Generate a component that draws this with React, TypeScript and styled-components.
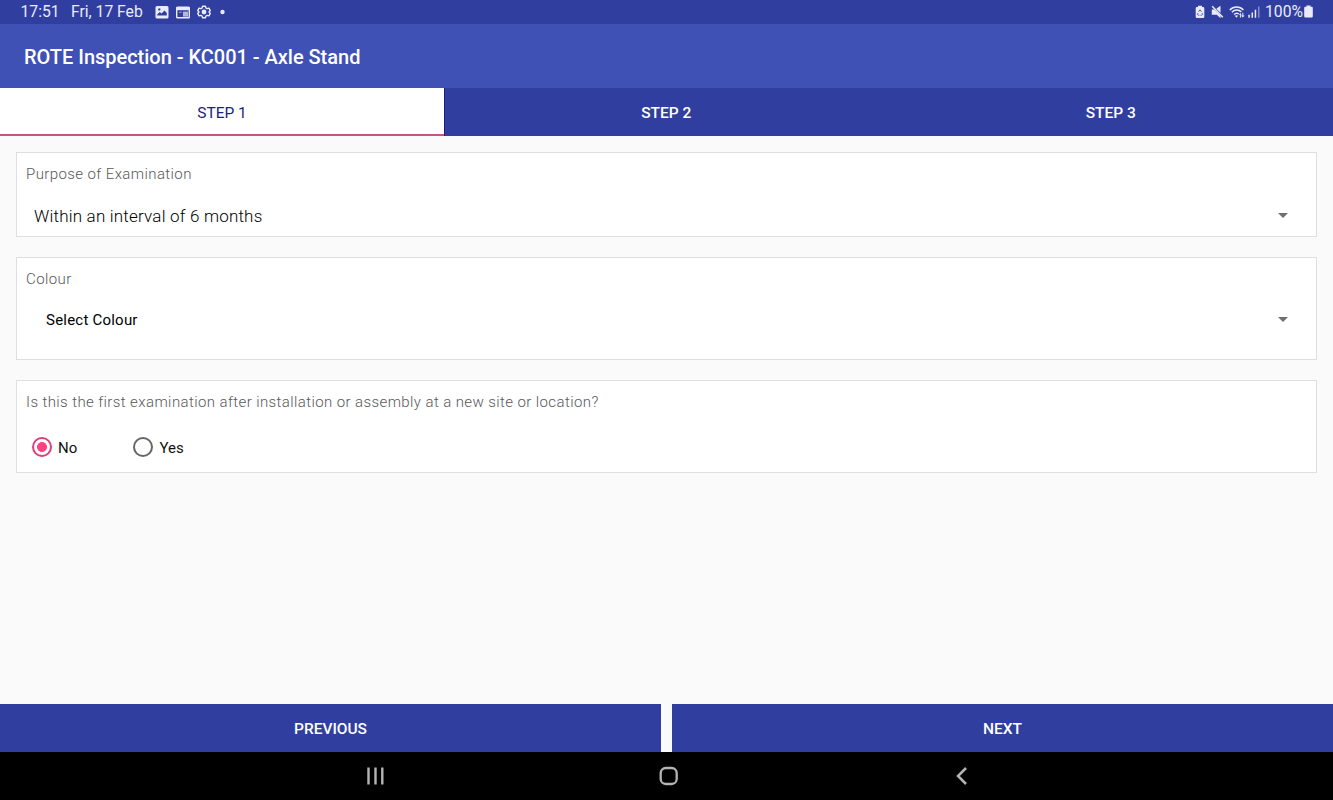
import { useState } from 'react';
import styled, { createGlobalStyle } from 'styled-components';

const colors = {
  primary: '#3f51b5',
  primaryDark: '#303f9f',
  accent: '#ff4081',
  status: '#e9ebfa',
  nav: '#b4b4b4',
};

const GlobalStyle = createGlobalStyle`
  * {
    box-sizing: border-box;
  }
  body {
    margin: 0;
    font-family: Roboto, 'Liberation Sans', sans-serif;
  }
  button {
    font-family: inherit;
    border: none;
    padding: 0;
    cursor: pointer;
  }
`;

const StyledScreen = styled('div')`
  display: flex;
  flex-direction: column;
  height: 100vh;
  overflow: hidden;
  background-color: #fafafa;
`;
const StyledStatusBar = styled('div')`
  display: flex;
  justify-content: space-between;
  height: 24px;
  padding: 0 20px 0 20.5px;
  background-color: ${colors.primaryDark};
  color: ${colors.status};
  font-size: 15.7px;
  line-height: 24px;
`;
const StyledStatusGroup = styled('div')`
  display: flex;
  align-items: center;
`;
const StyledStatusText = styled('span')<{ $width: number }>`
  width: ${({ $width }) => $width}px;
  white-space: nowrap;
`;
const StyledStatusIcon = styled('svg')<{ $gap: number }>`
  display: block;
  flex: none;
  margin-right: ${({ $gap }) => $gap}px;
`;
const StyledAppBar = styled('header')`
  display: flex;
  align-items: center;
  height: 64px;
  padding: 1px 24px 0;
  background-color: ${colors.primary};
`;
const StyledTitle = styled('h1')`
  margin: 0;
  color: #fff;
  font-size: 20px;
  font-weight: 500;
  letter-spacing: -0.02px;
`;
const StyledTabs = styled('div')`
  display: grid;
  grid-template-columns: 444px 1fr 1fr;
  height: 48px;
  background-color: ${colors.primaryDark};
`;
const StyledTab = styled('button')<{ $active: boolean }>`
  padding-top: 1px;
  background-color: ${({ $active }) => ($active ? '#fff' : 'transparent')};
  box-shadow: ${({ $active }) => ($active ? 'inset 0 -2px 0 #c2577f, 1px 0 0 #1a237e' : 'none')};
  color: ${({ $active }) => ($active ? '#1a237e' : '#fff')};
  font-size: 15.5px;
  font-weight: ${({ $active }) => ($active ? 400 : 500)};
`;
const StyledForm = styled('main')`
  flex: 1;
  display: flex;
  flex-direction: column;
  gap: 20px;
  padding: 16px;
`;
const StyledCard = styled('section')<{ $height: number }>`
  height: ${({ $height }) => $height}px;
  padding: 11px 9px 0;
  border: 1px solid #dfdfdf;
  background-color: #fff;
`;
const StyledLabel = styled('div')`
  color: #585858;
  font-size: 15px;
  font-weight: 300;
  line-height: 20px;
  letter-spacing: 0.4px;
`;
const StyledSelect = styled('div')<{ $inset: number; $top: number; $size: number; $weight: number; $spacing: number }>`
  display: flex;
  align-items: center;
  justify-content: space-between;
  height: 24px;
  margin-top: ${({ $top }) => $top}px;
  padding: 0 19px 0 ${({ $inset }) => $inset}px;
  color: #000;
  font-size: ${({ $size }) => $size}px;
  font-weight: ${({ $weight }) => $weight};
  letter-spacing: ${({ $spacing }) => $spacing}px;
`;
const StyledCaret = styled('svg')`
  display: block;
`;
const StyledRadioGroup = styled('div')`
  display: flex;
  margin-top: 25px;
  padding-left: 6px;
`;
const StyledRadio = styled('label')`
  display: flex;
  align-items: center;
  width: 101.4px;
  height: 20px;
  color: #111;
  font-size: 15px;
  line-height: 22px;
  cursor: pointer;
`;
const StyledRadioInput = styled('input')`
  appearance: none;
  width: 20px;
  height: 20px;
  margin: 0 6px 0 0;
  border: 2px solid #666;
  border-radius: 50%;

  &:checked {
    border-color: #dd3f7c;
    background: radial-gradient(circle, ${colors.accent} 4.6px, transparent 5.3px);
  }
`;
const StyledRadioText = styled('span')`
  padding-top: 2px;
`;
const StyledActions = styled('footer')`
  display: grid;
  grid-template-columns: 1fr 1fr;
  gap: 11px;
  height: 48px;
`;
const StyledActionButton = styled('button')`
  padding-top: 1px;
  background-color: ${colors.primaryDark};
  color: #fff;
  font-size: 15.5px;
  font-weight: 500;
`;
const StyledNavBar = styled('nav')`
  display: flex;
  align-items: center;
  justify-content: center;
  gap: 269px;
  height: 48px;
  padding-left: 5px;
  background-color: #000;
`;
const StyledNavButton = styled('button')`
  display: block;
  width: 24px;
  height: 24px;
  background: none;
`;

const Caret = () => (
  <StyledCaret width="10" height="6" viewBox="0 0 10 6">
    <path d="M0 0h10L5 5z" fill="#707070" />
  </StyledCaret>
);

const StatusBar = () => (
  <StyledStatusBar>
    <StyledStatusGroup>
      <StyledStatusText $width={50.5}>17:51</StyledStatusText>
      <StyledStatusText $width={84}>Fri, 17 Feb</StyledStatusText>
      <StyledStatusIcon $gap={7} width="14" height="24" viewBox="0 0 14 24">
        <path
          fillRule="evenodd"
          fill={colors.status}
          d="M2 6h10a1.5 1.5 0 0 1 1.5 1.5v9.500a1.500 1.500 0 0 1-1.500 1.500H2A1.500 1.500 0 0 1 .5 17V7.500A1.500 1.500 0 0 1 2 6zm.2 9.500h9.600V13L9.500 10.500l-3 3-1.700-1.400-2.600 2.500zM4.300 8.200a1.200 1.200 0 1 0 .01 0z"
        />
      </StyledStatusIcon>
      <StyledStatusIcon $gap={6.5} width="14" height="24" viewBox="0 0 14 24">
        <rect x="0.700" y="7.200" width="12.600" height="10.600" rx="0.800" fill="none" stroke={colors.status} strokeWidth="1.400" />
        <path d="M.5 7h13v3.200H.5z" fill={colors.status} />
        <path d="M2.800 11.800h3v.9h-3z" fill={colors.status} opacity="0.600" />
        <path d="M7 11.600h5v5H7z" fill={colors.status} opacity="0.700" />
      </StyledStatusIcon>
      <StyledStatusIcon $gap={9.5} width="14" height="24" viewBox="0 0 14 24">
        <path
          d="M5.600 6.200h2.800l.5 1.800 1.200.7 1.800-.5 1.400 2.400-1.300 1.400 1.300 1.400-1.400 2.400-1.800-.5-1.200.7-.5 1.800H5.600L5.100 16l-1.200-.7-1.800.5-1.400-2.400L2 12 .7 10.600l1.400-2.400 1.800.5L5.100 8z"
          fill="none"
          stroke={colors.status}
          strokeWidth="1.400"
          strokeLinejoin="round"
        />
        <circle cx="7" cy="12" r="2.400" fill={colors.status} />
      </StyledStatusIcon>
      <StyledStatusIcon $gap={0} width="5" height="24" viewBox="0 0 5 24">
        <circle cx="2.500" cy="12" r="2.200" fill={colors.status} />
      </StyledStatusIcon>
    </StyledStatusGroup>
    <StyledStatusGroup>
      <StyledStatusIcon $gap={6} width="10" height="24" viewBox="0 0 10 24">
        <path d="M3 5.800h4V7h1a1.300 1.300 0 0 1 1.300 1.300v8.400A1.300 1.300 0 0 1 8 18H2a1.300 1.300 0 0 1-1.300-1.300V8.300A1.300 1.300 0 0 1 2 7h1z" fill={colors.status} />
        <path
          d="M3.600 11.800 5 9.800l1.400 2M7 13l.6 1.400-.8.8H5.400M4.400 15.200H3.200l-.8-.8L3 13"
          fill="none"
          stroke={colors.primaryDark}
          strokeWidth="0.800"
        />
      </StyledStatusIcon>
      <StyledStatusIcon $gap={5} width="13" height="24" viewBox="0 0 13 24">
        <path d="M.8 9.500h2.500l6.200 6.300v2.400L5.800 14.700h-5zM5.300 8.800l4.200-3v7z" fill={colors.status} />
        <path d="M1.200 6.300l10.600 11" stroke={colors.status} strokeWidth="1.500" />
      </StyledStatusIcon>
      <StyledStatusIcon $gap={3} width="16" height="24" viewBox="0 0 16 24">
        <path
          d="M.8 9.900C4.500 6 10.800 6 14.400 9.900M2.900 12.200c2.700-2.800 6.900-2.800 9.400-.3M5.100 14.500c1.500-1.500 3.400-1.500 4.700-.5"
          fill="none"
          stroke={colors.status}
          strokeWidth="1.500"
        />
        <path d="M5.800 15.800c1-.8 2.400-.8 3.200 0L7.500 17.800z" fill={colors.status} />
        <path d="M9.800 14.800l1.600-1.900 1.200 1.900zM12 15.400h3.600l-1.800 2.200z" fill={colors.status} />
        <path d="M11.400 14v3.600M13.800 12.800v3.400" stroke={colors.status} strokeWidth="1" />
      </StyledStatusIcon>
      <StyledStatusIcon $gap={5} width="12" height="24" viewBox="0 0 12 24">
        <path d="M.3 14.800h1.500v2.900H.3zM3.500 12.500H5v5.200H3.500zM6.700 9.700h1.500v8H6.700z" fill={colors.status} />
        <path d="M10 6.500h1.500v11.200H10z" fill={colors.status} opacity="0.450" />
      </StyledStatusIcon>
      <StyledStatusText $width={39}>100%</StyledStatusText>
      <StyledStatusIcon $gap={0} width="9" height="24" viewBox="0 0 9 24">
        <path d="M2.500 5.500h4v1.200h1a1.300 1.300 0 0 1 1.300 1.300v8.200a1.300 1.300 0 0 1-1.300 1.300h-6A1.300 1.300 0 0 1 .2 16.200V8a1.300 1.300 0 0 1 1.300-1.300h1z" fill={colors.status} />
      </StyledStatusIcon>
    </StyledStatusGroup>
  </StyledStatusBar>
);

const steps = ['STEP 1', 'STEP 2', 'STEP 3'];

export default function App() {
  const [step, setStep] = useState(0);
  const [first, setFirst] = useState('No');

  return (
    <>
      <GlobalStyle />
      <StyledScreen>
        <StatusBar />
        <StyledAppBar>
          <StyledTitle>ROTE Inspection - KC001 - Axle Stand</StyledTitle>
        </StyledAppBar>
        <StyledTabs>
          {steps.map((label, index) => (
            <StyledTab key={label} $active={index === step} onClick={() => setStep(index)}>
              {label}
            </StyledTab>
          ))}
        </StyledTabs>
        <StyledForm>
          <StyledCard $height={85}>
            <StyledLabel>Purpose of Examination</StyledLabel>
            <StyledSelect $inset={8} $top={20} $size={17} $weight={300} $spacing={0.2}>
              Within an interval of 6 months
              <Caret />
            </StyledSelect>
          </StyledCard>
          <StyledCard $height={103}>
            <StyledLabel>Colour</StyledLabel>
            <StyledSelect $inset={20} $top={19} $size={15} $weight={400} $spacing={0.22}>
              Select Colour
              <Caret />
            </StyledSelect>
          </StyledCard>
          <StyledCard $height={93}>
            <StyledLabel>
              Is this the first examination after installation or assembly at a new site or location?
            </StyledLabel>
            <StyledRadioGroup>
              {['No', 'Yes'].map((option) => (
                <StyledRadio key={option}>
                  <StyledRadioInput
                    type="radio"
                    name="first"
                    checked={first === option}
                    onChange={() => setFirst(option)}
                  />
                  <StyledRadioText>{option}</StyledRadioText>
                </StyledRadio>
              ))}
            </StyledRadioGroup>
          </StyledCard>
        </StyledForm>
        <StyledActions>
          <StyledActionButton onClick={() => setStep(Math.max(step - 1, 0))}>PREVIOUS</StyledActionButton>
          <StyledActionButton onClick={() => setStep(Math.min(step + 1, 2))}>NEXT</StyledActionButton>
        </StyledActions>
        <StyledNavBar>
          <StyledNavButton aria-label="Recent apps">
            <svg width="24" height="24" viewBox="0 0 24 24">
              <path d="M4.500 3.500v17M11.500 3.500v17M18.300 3.500v17" stroke={colors.nav} strokeWidth="2.400" />
            </svg>
          </StyledNavButton>
          <StyledNavButton aria-label="Home">
            <svg width="24" height="24" viewBox="0 0 24 24">
              <rect x="3.700" y="4" width="16" height="16" rx="5" fill="none" stroke={colors.nav} strokeWidth="2.300" />
            </svg>
          </StyledNavButton>
          <StyledNavButton aria-label="Back">
            <svg width="24" height="24" viewBox="0 0 24 24">
              <path d="M16 4 8 12l8 8" fill="none" stroke={colors.nav} strokeWidth="2.500" />
            </svg>
          </StyledNavButton>
        </StyledNavBar>
      </StyledScreen>
    </>
  );
}
